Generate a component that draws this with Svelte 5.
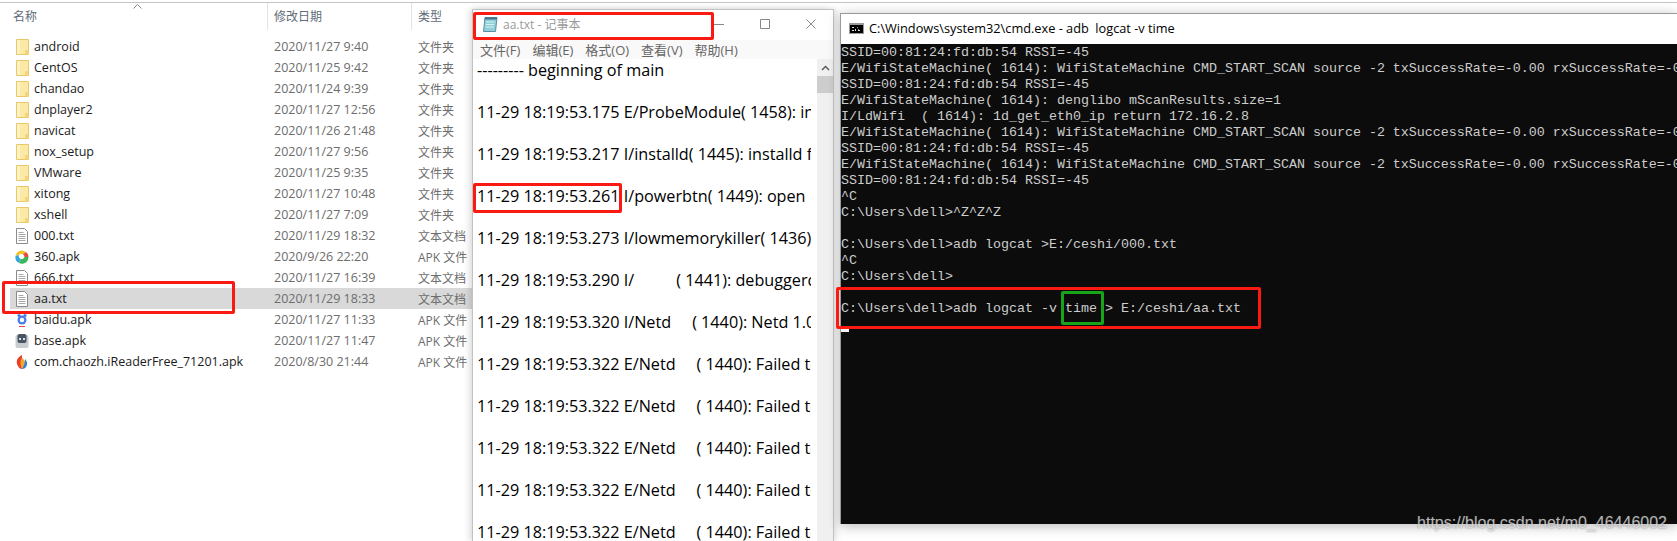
<script>
  const files = [
    { name: "android", date: "2020/11/27 9:40", type: "文件夹", icon: "folder" },
    { name: "CentOS", date: "2020/11/25 9:42", type: "文件夹", icon: "folder" },
    { name: "chandao", date: "2020/11/24 9:39", type: "文件夹", icon: "folder" },
    { name: "dnplayer2", date: "2020/11/27 12:56", type: "文件夹", icon: "folder" },
    { name: "navicat", date: "2020/11/26 21:48", type: "文件夹", icon: "folder" },
    { name: "nox_setup", date: "2020/11/27 9:56", type: "文件夹", icon: "folder" },
    { name: "VMware", date: "2020/11/25 9:35", type: "文件夹", icon: "folder" },
    { name: "xitong", date: "2020/11/27 10:48", type: "文件夹", icon: "folder" },
    { name: "xshell", date: "2020/11/27 7:09", type: "文件夹", icon: "folder" },
    { name: "000.txt", date: "2020/11/29 18:32", type: "文本文档", icon: "txt" },
    { name: "360.apk", date: "2020/9/26 22:20", type: "APK 文件", icon: "360" },
    { name: "666.txt", date: "2020/11/27 16:39", type: "文本文档", icon: "txt" },
    { name: "aa.txt", date: "2020/11/29 18:33", type: "文本文档", icon: "txt", selected: true },
    { name: "baidu.apk", date: "2020/11/27 11:33", type: "APK 文件", icon: "baidu" },
    { name: "base.apk", date: "2020/11/27 11:47", type: "APK 文件", icon: "base" },
    { name: "com.chaozh.iReaderFree_71201.apk", date: "2020/8/30 21:44", type: "APK 文件", icon: "reader" }
  ];

  const menu = ["文件(F)", "编辑(E)", "格式(O)", "查看(V)", "帮助(H)"];

  const failed = "11-29 18:19:53.322 E/Netd     ( 1440): Failed to";
  const notes = [
    "--------- beginning of main",
    "11-29 18:19:53.175 E/ProbeModule( 1458): init",
    "11-29 18:19:53.217 I/installd( 1445): installd firing",
    "11-29 18:19:53.261 I/powerbtn( 1449): open",
    "11-29 18:19:53.273 I/lowmemorykiller( 1436): Using",
    "11-29 18:19:53.290 I/          ( 1441): debuggerd: starting",
    "11-29 18:19:53.320 I/Netd     ( 1440): Netd 1.0 starting",
    failed, failed, failed, failed, failed
  ];

  const scan = "E/WifiStateMachine( 1614): WifiStateMachine CMD_START_SCAN source -2 txSuccessRate=-0.00 rxSuccessRate=-0.00 targetRoamBSSID=any";
  const ssid = "SSID=00:81:24:fd:db:54 RSSI=-45";
  const consoleLines = [
    ssid,
    scan,
    ssid,
    "E/WifiStateMachine( 1614): denglibo mScanResults.size=1",
    "I/LdWifi  ( 1614): 1d_get_eth0_ip return 172.16.2.8",
    scan,
    ssid,
    scan,
    ssid,
    "^C",
    "C:\\Users\\dell>^Z^Z^Z",
    " ",
    "C:\\Users\\dell>adb logcat >E:/ceshi/000.txt",
    "^C",
    "C:\\Users\\dell>",
    " ",
    "C:\\Users\\dell>adb logcat -v time > E:/ceshi/aa.txt"
  ];
</script>

{#snippet fileIcon(kind)}
  <svg class="file-icon" viewBox="0 0 16 16" width="16" height="16">
    {#if kind === "folder"}
      <path d="M2.5 0.5h12v15h-12z" fill="#fde9a6" stroke="#e9c868" />
      <path d="M3 1h3v14h-3z" fill="#fff3c4" />
      <path d="M11 11h3.5v4.5h-3.5z" fill="#f5d57a" />
    {:else if kind === "txt"}
      <path d="M2.5 0.5h8l3 3v12h-11z" fill="#fff" stroke="#8a8a8a" />
      <path d="M4.5 4.5h5M4.5 6.5h7M4.5 8.5h7M4.5 10.5h7M4.5 12.5h7" stroke="#a8a8a8" />
    {:else if kind === "360"}
      <circle cx="8" cy="8" r="6.5" fill="#fff" />
      <path d="M1.5 7a6.5 6.5 0 0 1 10.5-4l-3 2.5a3 3 0 0 0-4 .5z" fill="#f2c21e" />
      <path d="M12 3a6.5 6.5 0 0 1 2.5 5l-4 0a3 3 0 0 0-1.5-2.5z" fill="#e8483f" />
      <path d="M14.5 8a6.5 6.5 0 0 1-9.5 6l2-4a3 3 0 0 0 3.5-2z" fill="#3fb55a" />
      <path d="M5 14a6.5 6.5 0 0 1-3.5-7l3.5-1a3 3 0 0 0 2 4z" fill="#35a7e0" />
    {:else if kind === "baidu"}
      <circle cx="8" cy="8" r="4.5" fill="#4a7fe8" />
      <circle cx="5" cy="3.5" r="1.6" fill="#4a7fe8" />
      <circle cx="11" cy="3.5" r="1.6" fill="#4a7fe8" />
      <circle cx="8" cy="8" r="2.2" fill="#fff" />
      <path d="M5 14.5h6" stroke="#e44" />
    {:else if kind === "base"}
      <rect x="1.5" y="2" width="13" height="13" rx="2" fill="#c9ccd0" />
      <rect x="3.5" y="1" width="9" height="9" rx="2" fill="#4a5460" />
      <rect x="5" y="5" width="2" height="2" fill="#cfe0ee" />
      <rect x="9" y="5" width="2" height="2" fill="#cfe0ee" />
    {:else}
      <path d="M8 1c-4 2-6 5-5 9 1 3 3 5 5 5z" fill="#e8402a" />
      <path d="M8 4c-2 2-2 7 0 11 2-1 3-3 3-6 0-2-1-4-3-5z" fill="#f5a623" />
      <path d="M11 5c2 2 3 5 1 8-1 1-2 2-4 2 2-3 3-6 3-10z" fill="#2f7fe0" />
    {/if}
  </svg>
{/snippet}

<div class="page">
  <div class="top-line"></div>
  <div class="panes">
    <section class="explorer">
      <div class="head">
        <div class="hcell first">名称</div>
        <div class="hcell">修改日期</div>
        <div class="hcell">类型</div>
        <svg class="caret" viewBox="0 0 9 5" width="9" height="5"><path d="M0.5 4.5l4-4 4 4" fill="none" stroke="#888" /></svg>
      </div>
      {#each files as f}
        <div class="row" class:selected={f.selected}>
          <div class="name">{@render fileIcon(f.icon)}<span>{f.name}</span></div>
          <div class="meta">{f.date}</div>
          <div class="meta kind">{f.type}</div>
        </div>
      {/each}
    </section>

    <section class="notepad">
      <div class="np-title">
        <svg class="np-icon" viewBox="0 0 16 16" width="16" height="16">
          <path d="M3 1.5h12l-1.5 14h-12z" fill="#8fd0d8" stroke="#5a8ea0" />
          <path d="M3 1.5h12l-.3 2h-12z" fill="#46708a" />
          <path d="M4 6h8.5M3.7 8.5h8.5M3.4 11h8.5" stroke="#d9f0f2" />
        </svg>
        <span class="np-name">aa.txt - 记事本</span>
        <div class="controls">
          <svg viewBox="0 0 10 10" width="10" height="10"><path d="M0 5.5h10" stroke="#888" /></svg>
          <svg viewBox="0 0 10 10" width="10" height="10"><path d="M0.5 0.5h9v9h-9z" fill="none" stroke="#888" /></svg>
          <svg viewBox="0 0 10 10" width="10" height="10"><path d="M0.5 0.5l9 9M9.5 0.5l-9 9" fill="none" stroke="#888" /></svg>
        </div>
      </div>
      <div class="np-menu">
        {#each menu as item}<span>{item}</span>{/each}
      </div>
      <div class="np-body">
        <div class="np-text">
          {#each notes as line}<div class="np-line">{line}</div>{/each}
        </div>
        <div class="scrollbar">
          <svg viewBox="0 0 9 6" width="9" height="6"><path d="M1 5l3.5-3.5 3.5 3.5" fill="none" stroke="#555" stroke-width="1.4" /></svg>
          <div class="thumb"></div>
        </div>
      </div>
    </section>

    <section class="cmd">
      <div class="cmd-title">
        <svg class="cmd-icon" viewBox="0 0 15 11" width="15" height="11">
          <rect width="15" height="11" fill="#9a9a9a" />
          <rect x="1" y="2" width="13" height="8" fill="#000" />
          <path d="M3 4h2v1h-2v2h2v1h-2zM6 6h1v2h-1zM8 4h1v4h2v-1h-1" fill="#ddd" />
        </svg>
        <span>C:\Windows\system32\cmd.exe - adb&nbsp; logcat -v time</span>
      </div>
      <div class="cmd-body">
        {#each consoleLines as line}<div class="cmd-line">{line}</div>{/each}
        <div class="cursor"></div>
      </div>
    </section>
  </div>

  <div class="mark red file-mark"></div>
  <div class="mark red title-mark"></div>
  <div class="mark red time-mark"></div>
  <div class="mark red cmd-mark"></div>
  <div class="mark green opt-mark"></div>
  <div class="watermark">https://blog.csdn.net/m0_46446002</div>
</div>

<style>
  :global(body) {
    margin: 0;
    background: #fff;
  }

  .page {
    position: relative;
    width: 1677px;
    height: 541px;
    overflow: hidden;
    background: #fff;
    font-family: "Open Sans", "Noto Sans CJK SC", sans-serif;
  }

  .top-line {
    height: 1px;
    margin-top: 2px;
    background: #c4c4c4;
  }

  .panes {
    display: flex;
    height: 538px;
  }

  .explorer {
    width: 472px;
    flex: none;
    font-size: 12.5px;
  }

  .head {
    position: relative;
    display: grid;
    grid-template-columns: 254px 144px 1fr;
    height: 27px;
    margin-bottom: 6px;
    padding-left: 13px;
    font-size: 12px;
    color: #5f6b78;
  }

  .hcell {
    padding: 4px 0 0 6px;
    border-left: 1px solid #e3e3e3;
  }

  .hcell.first {
    padding-left: 0;
    border-left: 0;
  }

  .caret {
    position: absolute;
    left: 133px;
    top: 1px;
  }

  .row {
    display: grid;
    grid-template-columns: 260px 144px 1fr;
    align-items: center;
    height: 21px;
    margin-left: 10px;
    padding-left: 4px;
    white-space: nowrap;
  }

  .row.selected {
    background: #d9d9d9;
  }

  .name {
    display: flex;
    align-items: center;
    gap: 4px;
    color: #1a1a1a;
  }

  .file-icon {
    flex: none;
  }

  .meta {
    color: #6d6d6d;
  }

  .meta.kind {
    font-size: 12px;
  }

  .notepad {
    width: 362px;
    flex: none;
    margin-top: 6px;
    display: flex;
    flex-direction: column;
    background: #fff;
    border: 1px solid #c2c2c2;
    border-bottom: 0;
    box-sizing: border-box;
    box-shadow: -3px 0 6px rgba(0, 0, 0, 0.12), 3px 0 6px rgba(0, 0, 0, 0.1);
  }

  .np-title {
    display: flex;
    align-items: center;
    height: 30px;
    padding-left: 9px;
    padding-bottom: 2px;
    box-sizing: border-box;
    flex: none;
  }

  .np-icon {
    flex: none;
  }

  .np-name {
    margin-left: 5px;
    font-size: 12px;
    color: #9a9a9a;
  }

  .controls {
    display: flex;
    gap: 36px;
    margin-left: auto;
    padding-right: 17px;
  }

  .np-menu {
    display: flex;
    gap: 12px;
    height: 19px;
    flex: none;
    padding-left: 7px;
    align-items: center;
    font-size: 13px;
    color: #666;
    background: #f9f9f9;
  }

  .np-body {
    flex: 1;
    min-height: 0;
    display: flex;
    overflow: hidden;
  }

  .np-text {
    flex: 1;
    min-width: 0;
    display: flex;
    flex-direction: column;
    gap: 20px;
    margin-right: 6px;
    padding-left: 4px;
    overflow: hidden;
    font-size: 16.2px;
    line-height: 22px;
    color: #000;
  }

  .np-line {
    flex: none;
    overflow: hidden;
    white-space: pre;
  }

  .scrollbar {
    width: 16px;
    flex: none;
    display: flex;
    flex-direction: column;
    align-items: center;
    background: #f0f0f0;
    padding-top: 6px;
    box-sizing: border-box;
  }

  .thumb {
    width: 100%;
    height: 17px;
    margin-top: 5px;
    background: #cdcdcd;
  }

  .cmd {
    flex: 1;
    min-width: 0;
    height: 511px;
    margin-top: 10px;
    margin-left: 6px;
    display: flex;
    flex-direction: column;
    background: #fff;
    border-top: 1px solid #999;
    border-left: 1px solid #999;
    box-sizing: border-box;
    box-shadow: 0 2px 12px rgba(0, 0, 0, 0.28);
  }

  .cmd-title {
    display: flex;
    align-items: center;
    gap: 5px;
    height: 30px;
    flex: none;
    padding-left: 8px;
    padding-bottom: 2px;
    box-sizing: border-box;
    font-size: 12.75px;
    color: #000;
  }

  .cmd-icon {
    flex: none;
  }

  .cmd-body {
    flex: 1;
    overflow: hidden;
    padding-top: 1px;
    background: #0c0c0c;
    color: #cccccc;
    font-family: "Liberation Mono", "DejaVu Sans Mono", monospace;
    font-size: 13.33px;
    line-height: 16px;
  }

  .cmd-line {
    height: 16px;
    white-space: pre;
  }

  .cursor {
    width: 8px;
    height: 3px;
    margin-top: 12px;
    background: #f2f2f2;
  }

  /* annotations drawn on top of the screenshot */
  .mark {
    position: absolute;
    box-sizing: border-box;
    border: 3px solid #fb1a12;
    border-radius: 2px;
  }

  .mark.green {
    border-color: #18a418;
  }

  .file-mark {
    left: 2px;
    top: 281px;
    width: 233px;
    height: 33px;
  }

  .title-mark {
    left: 473px;
    top: 12px;
    width: 241px;
    height: 28px;
  }

  .time-mark {
    left: 473px;
    top: 183px;
    width: 149px;
    height: 30px;
  }

  .cmd-mark {
    left: 836px;
    top: 287px;
    width: 425px;
    height: 42px;
  }

  .opt-mark {
    left: 1061px;
    top: 291px;
    width: 43px;
    height: 34px;
  }

  .watermark {
    position: absolute;
    right: 10px;
    top: 513px;
    font-family: "Liberation Sans", sans-serif;
    font-size: 16px;
    line-height: 20px;
    color: rgba(235, 235, 235, 0.75);
    text-shadow: 0 0 2px rgba(60, 60, 60, 0.6);
  }
</style>
